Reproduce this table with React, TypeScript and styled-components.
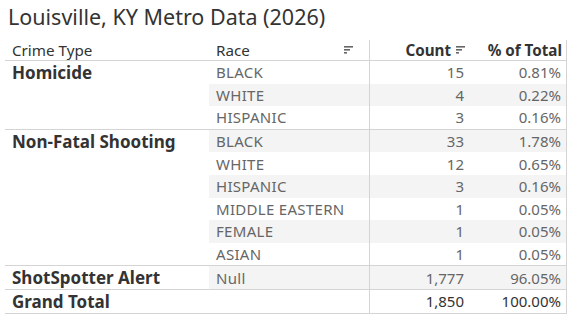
import React from "react";
import styled, { createGlobalStyle } from "styled-components";

const Global = createGlobalStyle`
  html, body { margin: 0; padding: 0; background: #fff; }
  body { font-family: "Noto Sans", "Open Sans", sans-serif; color: #333; }
`;

const Page = styled.div`
  width: 583px;
  height: 330px;
  overflow: hidden;
  padding-left: 5px;
  box-sizing: border-box;
`;

const Title = styled.h1`
  margin: 0;
  height: 40px;
  padding: 3px 0 0 3px;
  box-sizing: border-box;
  font-size: 21.5px;
  font-weight: 400;
  color: #333;
  line-height: 28px;
  white-space: nowrap;
`;

const Table = styled.div`
  width: 562px;
  display: flex;
  flex-direction: column;
`;

const LINE = "#d4d4d4";

const HeaderRow = styled.div`
  display: grid;
  grid-template-columns: 204px 160px 100px 98px;
  height: 21px;
  border-bottom: 1px solid ${LINE};
  box-sizing: border-box;
  font-size: 15.2px;
  line-height: 20px;
`;

const HeadCell = styled.div<{ $align?: "left" | "right"; $sep?: boolean; $bold?: boolean; $last?: boolean }>`
  display: flex;
  align-items: center;
  justify-content: ${(p) => (p.$align === "right" ? "flex-end" : "space-between")};
  gap: 5px;
  padding: ${(p) => (p.$align === "right" ? "0 4px 0 0" : "0 16px 0 7px")};
  font-weight: ${(p) => (p.$bold ? 700 : 400)};
  color: #333;
  border-left: ${(p) => (p.$sep ? `1px solid ${LINE}` : "none")};
  border-right: ${(p) => (p.$last ? `1px solid ${LINE}` : "none")};
  white-space: nowrap;
`;

const Group = styled.div`
  display: grid;
  grid-template-columns: 204px 358px;
  border-bottom: 1px solid ${LINE};
`;

const GroupLabel = styled.div`
  align-self: start;
  height: 22.6px;
  box-sizing: border-box;
  font-size: 17px;
  font-weight: 700;
  color: #333;
  padding: 2px 0 0 7px;
  line-height: 20.6px;
  white-space: nowrap;
`;

const Rows = styled.div`
  display: flex;
  flex-direction: column;
`;

const Row = styled.div<{ $shade: boolean }>`
  display: grid;
  grid-template-columns: 160px 100px 98px;
  height: 22.6px;
  background: ${(p) => (p.$shade ? "#f4f4f4" : "transparent")};
  font-size: 15px;
`;

const RaceCell = styled.div`
  padding-left: 7px;
  color: #666;
  display: flex;
  align-items: center;
  letter-spacing: 0.3px;
  white-space: nowrap;
`;

const NumCell = styled.div<{ $sep?: boolean; $last?: boolean; $strong?: boolean }>`
  display: flex;
  align-items: center;
  justify-content: flex-end;
  padding-right: 5px;
  color: ${(p) => (p.$strong ? "#333" : "#666")};
  border-left: ${(p) => (p.$sep ? `1px solid ${LINE}` : "none")};
  border-right: ${(p) => (p.$last ? `1px solid ${LINE}` : "none")};
`;

const SortIcon = () => (
  <svg width="9" height="8" viewBox="0 0 9 8">
    <rect x="0" y="0" width="9" height="1.6" fill="#666" />
    <rect x="0" y="3" width="6" height="1.6" fill="#666" />
    <rect x="0" y="6" width="3" height="1.6" fill="#666" />
  </svg>
);

type Item = { race: string; count: string; pct: string };
type GroupT = { label: string; items: Item[] };

const data: GroupT[] = [
  {
    label: "Homicide",
    items: [
      { race: "BLACK", count: "15", pct: "0.81%" },
      { race: "WHITE", count: "4", pct: "0.22%" },
      { race: "HISPANIC", count: "3", pct: "0.16%" },
    ],
  },
  {
    label: "Non-Fatal Shooting",
    items: [
      { race: "BLACK", count: "33", pct: "1.78%" },
      { race: "WHITE", count: "12", pct: "0.65%" },
      { race: "HISPANIC", count: "3", pct: "0.16%" },
      { race: "MIDDLE EASTERN", count: "1", pct: "0.05%" },
      { race: "FEMALE", count: "1", pct: "0.05%" },
      { race: "ASIAN", count: "1", pct: "0.05%" },
    ],
  },
  {
    label: "ShotSpotter Alert",
    items: [{ race: "Null", count: "1,777", pct: "96.05%" }],
  },
];

export default function App() {
  let idx = 0;
  return (
    <Page>
      <Global />
      <Title>Louisville, KY Metro Data (2026)</Title>
      <Table>
        <HeaderRow>
          <HeadCell>Crime Type</HeadCell>
          <HeadCell>
            <span>Race</span>
            <SortIcon />
          </HeadCell>
          <HeadCell $align="right" $sep $bold>
            <span>Count</span>
            <SortIcon />
          </HeadCell>
          <HeadCell $align="right" $bold $last>
            % of Total
          </HeadCell>
        </HeaderRow>
        {data.map((g) => (
          <Group key={g.label}>
            <GroupLabel>{g.label}</GroupLabel>
            <Rows>
              {g.items.map((it) => {
                const shade = idx++ % 2 === 1;
                return (
                  <Row key={it.race} $shade={shade}>
                    <RaceCell>{it.race}</RaceCell>
                    <NumCell $sep>{it.count}</NumCell>
                    <NumCell $last>{it.pct}</NumCell>
                  </Row>
                );
              })}
            </Rows>
          </Group>
        ))}
        <Group>
          <GroupLabel>Grand Total</GroupLabel>
          <Rows>
            <Row $shade={false}>
              <RaceCell />
              <NumCell $sep $strong>1,850</NumCell>
              <NumCell $last $strong>100.00%</NumCell>
            </Row>
          </Rows>
        </Group>
      </Table>
    </Page>
  );
}
